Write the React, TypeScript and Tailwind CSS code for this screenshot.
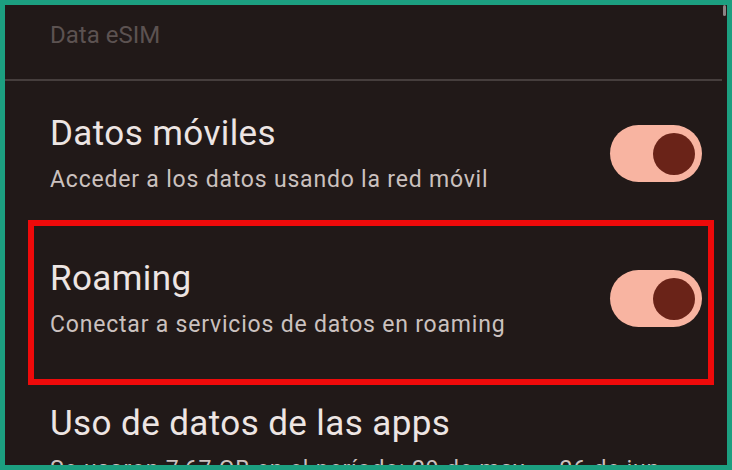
import React from 'react';

interface ToggleProps {
  on?: boolean;
}

const Toggle: React.FC<ToggleProps> = () => (
  <div className="w-[92px] h-[57px] rounded-full bg-[#f8b4a1] flex items-center justify-end pr-[7px] shrink-0">
    <div className="w-[42px] h-[42px] rounded-full bg-[#6a2318]" />
  </div>
);

interface RowProps {
  title: string;
  subtitle: string;
  toggle?: boolean;
}

const SettingRow: React.FC<RowProps> = ({ title, subtitle, toggle }) => (
  <div className="h-[145px] shrink-0 flex items-center justify-between pl-[45px] pr-[25px]">
    <div className="flex flex-col">
      <span className="text-[35px] leading-[40px] text-[#ede5e3] tracking-[0.4px] whitespace-nowrap">{title}</span>
      <span className="mt-[12px] text-[23px] leading-[28px] text-[#cbc1bf] tracking-[0.8px] whitespace-nowrap">{subtitle}</span>
    </div>
    {toggle && <Toggle on />}
  </div>
);

const App: React.FC = () => {
  return (
    <div
      className="relative w-[732px] h-[470px] border-[5px] border-[#1c9f80] bg-[#211918] overflow-hidden flex flex-col"
      style={{ fontFamily: 'Roboto, "Noto Sans", sans-serif' }}
    >
      {/* scroll indicator */}
      <div className="absolute right-[1px] top-0 w-[3px] h-[11px] bg-[#8a8484] rounded-sm" />

      {/* Header */}
      <div className="shrink-0 pl-[45px] pt-[16px] h-[74px]">
        <span className="text-[24px] leading-[28px] text-[#5c5251]">Data eSIM</span>
      </div>
      <div className="shrink-0 h-[2px] bg-[#463e3d] mr-[5px]" />

      <SettingRow title="Datos móviles" subtitle="Acceder a los datos usando la red móvil" toggle />

      {/* Roaming, highlighted */}
      <div className="relative shrink-0">
        <SettingRow title="Roaming" subtitle="Conectar a servicios de datos en roaming" toggle />
        <div className="absolute left-[23px] right-[13px] top-[-6px] bottom-[-14px] border-[6px] border-[#ee0a0a] pointer-events-none" />
      </div>

      <SettingRow title="Uso de datos de las apps" subtitle="Se usaron 7,67 GB en el período: 29 de may. – 26 de jun." />
    </div>
  );
};

export default App;
